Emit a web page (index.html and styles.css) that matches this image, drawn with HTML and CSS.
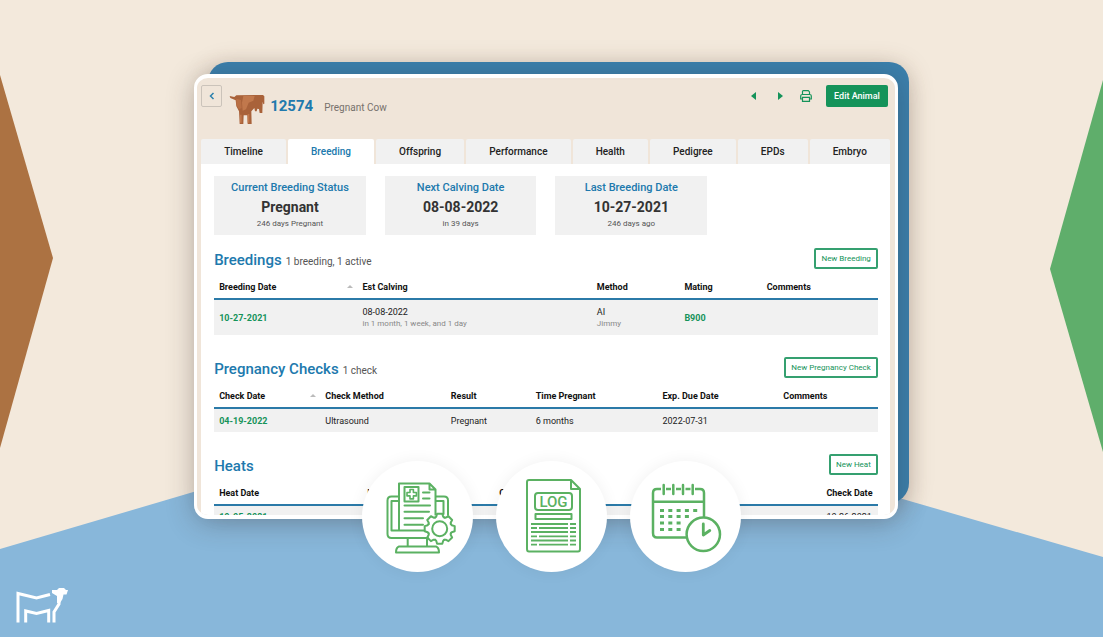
FILE: index.html
```html
<!DOCTYPE html>
<html lang="en">
<head>
<meta charset="utf-8">
<meta name="viewport" content="width=device-width, initial-scale=1">
<title>12574 – Breeding</title>
<link rel="stylesheet" href="styles.css">
</head>
<body>
<div class="stage">
  <svg class="backdrop" viewBox="0 0 1103 637" preserveAspectRatio="none" aria-hidden="true">
    <polygon points="0,75 53,258 0,448" fill="#ac7242"/>
    <polygon points="1103,80 1050,269 1103,452" fill="#5fae6b"/>
    <polygon points="0,549 533,392 1103,557 1103,637 0,637" fill="#88b7da"/>
  </svg>
  <div class="backing"></div>

  <main class="card">
    <header class="top">
      <button class="back" aria-label="Back">
        <svg width="6" height="8" viewBox="0 0 6 8"><path d="M4.500 1 1.500 4l3 3" fill="none" stroke="#2b80ad" stroke-width="1.500"/></svg>
      </button>
      <svg class="cow" viewBox="117 115 108 96" aria-hidden="true">
        <path d="M119 124l14 3 6-5 80-1 4 4v22l-3 2-2-8-1 34h-8l-2-12-5-1-2 8h-5l-2-10-9 10 1 38h-12l-1-26h-11l-1 26h-11l-2-38-8-15-2-18-16-7z" fill="#a9623a"/>
        <path d="M160 124h34l-4 14-14 6-8 20-10 4-2-24z" fill="#c1784c"/>
        <path d="M139 132l14 4 2 24-8 4-8-14z" fill="#b96f44"/>
        <path d="M150 180h5v24h-5zM173 178h5v26h-5z" fill="#c1784c"/>
      </svg>
      <h1 class="tag">12574</h1>
      <span class="kind">Pregnant Cow</span>
      <div class="actions">
        <button class="icon" aria-label="Previous animal"><svg width="6" height="8" viewBox="0 0 6 8"><path d="M5 0v8L0 4z" fill="#15935a"/></svg></button>
        <button class="icon" aria-label="Next animal"><svg width="6" height="8" viewBox="0 0 6 8"><path d="M1 0v8l5-4z" fill="#15935a"/></svg></button>
        <button class="icon" aria-label="Print"><svg width="12" height="12" viewBox="0 0 12 12" fill="none" stroke="#15935a" stroke-width="1.200"><path d="M2.500 4.500v-3q0-.8.8-.8h5l1.200 1.200v2.600M2.500 9H.7V6q0-1.500 1.500-1.500h7.600q1.500 0 1.500 1.500v3H9.500M2.500 7.300h7v4h-7z"/></svg></button>
        <button class="primary">Edit Animal</button>
      </div>
    </header>

    <nav class="tabs">
      <a href="#timeline">Timeline</a>
      <a href="#breeding" class="active" aria-current="page">Breeding</a>
      <a href="#offspring">Offspring</a>
      <a href="#performance">Performance</a>
      <a href="#health">Health</a>
      <a href="#pedigree">Pedigree</a>
      <a href="#epds">EPDs</a>
      <a href="#embryo">Embryo</a>
    </nav>

    <div class="content">
      <div class="stats">
        <div class="stat"><h2>Current Breeding Status</h2><strong>Pregnant</strong><small>246 days Pregnant</small></div>
        <div class="stat"><h2>Next Calving Date</h2><strong>08-08-2022</strong><small>in 39 days</small></div>
        <div class="stat"><h2>Last Breeding Date</h2><strong>10-27-2021</strong><small>246 days ago</small></div>
      </div>

      <section>
        <div class="head"><h2>Breedings</h2><span>1 breeding, 1 active</span><button class="outline">New Breeding</button></div>
        <table class="breedings">
          <colgroup><col class="c1"><col class="c2"><col class="c3"><col class="c4"><col class="c5"></colgroup>
          <thead><tr><th><div class="sort">Breeding Date</div></th><th>Est Calving</th><th>Method</th><th>Mating</th><th>Comments</th></tr></thead>
          <tbody><tr><td><a href="#b1">10-27-2021</a></td><td>08-08-2022<small>in 1 month, 1 week, and 1 day</small></td><td>AI<small>Jimmy</small></td><td><a href="#b900">B900</a></td><td></td></tr></tbody>
        </table>
      </section>

      <section>
        <div class="head"><h2>Pregnancy Checks</h2><span>1 check</span><button class="outline">New Pregnancy Check</button></div>
        <table class="checks">
          <colgroup><col class="c1"><col class="c2"><col class="c3"><col class="c4"><col class="c5"><col class="c6"></colgroup>
          <thead><tr><th><div class="sort">Check Date</div></th><th>Check Method</th><th>Result</th><th>Time Pregnant</th><th>Exp. Due Date</th><th>Comments</th></tr></thead>
          <tbody><tr><td><a href="#c1">04-19-2022</a></td><td>Ultrasound</td><td>Pregnant</td><td>6 months</td><td>2022-07-31</td><td></td></tr></tbody>
        </table>
      </section>

      <section>
        <div class="head"><h2>Heats</h2><button class="outline">New Heat</button></div>
        <table class="heats">
          <colgroup><col class="c1"><col class="c2"><col class="c3"><col class="c4"></colgroup>
          <thead><tr><th>Heat Date</th><th>Intensity</th><th>Comments</th><th>Check Date</th></tr></thead>
          <tbody><tr><td><a href="#h1">10-05-2021</a></td><td></td><td></td><td>10-26-2021</td></tr></tbody>
        </table>
      </section>
    </div>
  </main>

  <div class="features">
    <div class="feature">
      <svg viewBox="0 0 111 111" fill="none" stroke="#5bb162" stroke-width="2" stroke-linejoin="round" stroke-linecap="round" aria-label="Health records">
        <path d="M36 35.500H29.500q-4 0-4 4V73q0 4 4 4H66M74 35.500h8q4 0 4 4V54"/>
        <path d="M36 40h-6.500V69.500H62M74 40h7.500V53"/>
        <path d="M37 69V22.500H67.500l6 6V54M67.500 22.500v6h6"/>
        <path d="M42.500 26h14v14.500h-14z"/>
        <path d="M48 28.500h3.400v3h3v3.400h-3v3H48v-3h-3v-3.400h3z" stroke-width="1.600"/>
        <path d="M61 31.500h6.500M61 37.500h6.500M42.500 44.500H68M42.500 50.800H67M42.500 57.300H61M42.500 63.700H61"/>
        <path d="M45.700 77.500V85M65 77.500V85M37 85.500H74q3 1 3 6H34q0-5 3-6z"/>
        <g transform="translate(77.700 67.700)">
          <circle r="14" fill="#fff" stroke="none"/>
          <circle r="7.500"/>
          <path id="tooth" d="M-4.600-11.100-3.500-12-2.600-15H2.600L3.500-12 4.600-11.100"/>
          <use href="#tooth" transform="rotate(45)"/><use href="#tooth" transform="rotate(90)"/><use href="#tooth" transform="rotate(135)"/><use href="#tooth" transform="rotate(180)"/><use href="#tooth" transform="rotate(225)"/><use href="#tooth" transform="rotate(270)"/><use href="#tooth" transform="rotate(315)"/>
        </g>
      </svg>
    </div>
    <div class="feature">
      <svg viewBox="0 0 111 111" fill="none" stroke="#5bb162" stroke-width="2" stroke-linejoin="round" aria-label="Log">
        <path d="M75 19H33q-2 0-2 2v67q0 2.500 2 2.500h49q2 0 2-2.500V28zM75 19v9h9"/>
        <rect x="39" y="32" width="37" height="17" rx="3"/>
        <text x="57.500" y="46" text-anchor="middle" class="log">LOG</text>
        <path d="M39.500 53h36v5h-36z"/>
        <path d="M35 63H72M74 63h6M35 67h6M43 67H72M74 67h6M35 71H72M74 71h6M35 75.300h6M43 75.300H72M74 75.300h6M35 79.500H72M74 79.500h6M35 83.700h6M43 83.700H72M74 83.700h6" stroke-width="1.800"/>
      </svg>
    </div>
    <div class="feature">
      <svg viewBox="0 0 111 111" fill="none" stroke="#5bb162" stroke-width="2.500" stroke-linejoin="round" aria-label="Schedule">
        <path d="M31 28H27q-4 0-4 4V72q0 4.500 4 4.500H57M36 28h5M46 28h5M55.500 28h5M65 28h5q4 0 4 4V56M23 40.700H74"/>
        <path d="M33.700 24v9M43.300 24v9M53 24v9M62.700 24v9" stroke-linecap="round"/>
        <path d="M30 49.500h37.200M30 55.500h29M30 62h21M30 68.500h21" stroke-width="3" stroke-dasharray="4 4.300"/>
        <circle cx="73.300" cy="73.300" r="16.700" fill="#fff"/>
        <path d="M73.300 63V74l6.500-4.500" stroke-width="2.800" stroke-linecap="round"/>
      </svg>
    </div>
  </div>

  <svg class="logo" viewBox="0 0 54 38" fill="none" stroke="#fff" stroke-width="3" aria-label="Cattle logo">
    <path d="M3 35.500V6.500L21.500 11 35 7.500M10.700 35.500V24L21.500 26.500 33.700 23.500V35.500M39 35.500V25L44 17V9"/>
    <path d="M37 3h5l2-2h5l2 2h2L51.500 7.500H48.500L47.500 12 45 16H42V9L37 6z" fill="#fff" stroke="none"/>
  </svg>
</div>
</body>
</html>
```
FILE: styles.css
```css
* { box-sizing: border-box; }

body {
  margin: 0;
  font-family: Roboto, "Liberation Sans", sans-serif;
  color: #222;
}

h1, h2 { margin: 0; }
a { text-decoration: none; }

button {
  font-family: inherit;
  padding: 0;
  cursor: pointer;
}

.stage {
  position: relative;
  display: grid;
  grid-template-rows: minmax(0, 1fr);
  height: 100vh;
  min-height: 400px;
  padding: 74px 18.6% 118px 17.6%;
  background: #f3e9dc;
  overflow: hidden;
}

.backdrop {
  position: absolute;
  inset: 0;
  width: 100%;
  height: 100%;
}

.backing {
  position: absolute;
  inset: 62px 17.6% 134px 18.9%;
  border-radius: 20px;
  background: #3b80ad;
  box-shadow: 0 4px 24px rgba(90, 60, 40, 0.25);
}

.card {
  position: relative;
  overflow: hidden;
  padding: 0 5px 0 4px;
  border: solid #fff;
  border-width: 4px 3px;
  border-radius: 14px;
  background: #f0e5d9;
  box-shadow: 0 4px 28px rgba(50, 40, 40, 0.3);
}

.top {
  display: flex;
  align-items: flex-start;
  height: 61px;
  padding-top: 7px;
}

.back {
  display: grid;
  place-items: center;
  width: 21px;
  height: 22px;
  border: 1px solid #cbc3ba;
  border-radius: 2px;
  background: transparent;
}

.cow {
  width: 36px;
  height: 32px;
  margin: 8px 5px 0 7px;
}

.tag {
  margin-top: 11px;
  font-size: 15px;
  line-height: 20px;
  font-weight: 700;
  color: #2079ad;
}

.kind {
  margin: 15px 0 0 11px;
  font-size: 10px;
  line-height: 16px;
  color: #77716c;
}

.actions {
  display: flex;
  align-items: center;
  gap: 14px;
  margin-left: auto;
  margin-right: 2px;
}

.icon {
  display: grid;
  place-items: center;
  width: 12px;
  height: 22px;
  border: 0;
  background: none;
}

.primary {
  height: 22px;
  padding: 0 8px;
  border: 0;
  border-radius: 2px;
  background: #15935a;
  color: #fff;
  font-size: 9px;
  font-weight: 500;
}

.tabs {
  display: flex;
  gap: 2px;
}

.tabs a {
  flex: 1 1 auto;
  padding: 0 20px;
  border-radius: 2px 2px 0 0;
  background: #f1f1f1;
  color: #222;
  font-size: 10px;
  line-height: 25px;
  font-weight: 500;
  text-align: center;
}

.tabs .active {
  background: #fff;
  color: #2079ad;
}

.content {
  padding: 12px 12px 0 13px;
  background: #fff;
}

.stats {
  display: grid;
  grid-template-columns: repeat(4, 1fr);
  gap: 19px;
  margin-bottom: 13px;
}

.stat {
  display: flex;
  flex-direction: column;
  align-items: center;
  height: 59px;
  padding-top: 4px;
  background: #f1f1f1;
}

.stat h2 {
  font-size: 11px;
  line-height: 16px;
  font-weight: 500;
  color: #2079ad;
}

.stat strong {
  font-size: 14px;
  line-height: 22px;
  font-weight: 700;
  color: #333;
}

.stat small {
  font-size: 8px;
  line-height: 12px;
  color: #555;
}

section { margin-bottom: 22px; }

.head {
  display: flex;
  align-items: baseline;
  gap: 4px;
  height: 21px;
  margin-bottom: 6px;
}

.head h2 {
  font-size: 15px;
  line-height: 24px;
  font-weight: 500;
  color: #2079ad;
}

.head span {
  font-size: 10px;
  color: #555;
}

.outline {
  align-self: stretch;
  margin-left: auto;
  padding: 0 5px;
  border: 2px solid #35a070;
  border-radius: 2px;
  background: #fff;
  color: #15935a;
  font-size: 8px;
}

table {
  width: 100%;
  table-layout: fixed;
  border-collapse: collapse;
  font-size: 9px;
  line-height: 12px;
}

th, td {
  padding: 0 0 0 5px;
  text-align: left;
  white-space: nowrap;
}

th {
  height: 24px;
  border-bottom: 2px solid #2b7aa8;
  color: #111;
  font-weight: 700;
}

td {
  height: 24px;
  background: #f1f1f1;
}

.breedings td { height: 36px; }

td a {
  color: #15935a;
  font-weight: 700;
}

td small {
  display: block;
  font-size: 8px;
  line-height: 11px;
  color: #888;
}

.sort {
  display: flex;
  align-items: center;
  justify-content: space-between;
}

.sort::after {
  content: "";
  margin-right: 4px;
  border: 3px solid transparent;
  border-top: 0;
  border-bottom: 3px solid #bbb;
}

.breedings .c1 { width: 21.6%; }
.breedings .c2 { width: 35.3%; }
.breedings .c3 { width: 13.2%; }
.breedings .c4 { width: 12.4%; }
.breedings .c5 { width: 17.5%; }

.checks .c1 { width: 16%; }
.checks .c2 { width: 18.9%; }
.checks .c3 { width: 12.8%; }
.checks .c4 { width: 19.1%; }
.checks .c5 { width: 18.2%; }
.checks .c6 { width: 15%; }

.heats .c1 { width: 22.3%; }
.heats .c2 { width: 19.9%; }
.heats .c3 { width: 49.3%; }
.heats .c4 { width: 8.5%; }
.heats td { height: 22px; }

.features {
  position: absolute;
  right: 0;
  bottom: 65px;
  left: 0;
  display: flex;
  justify-content: center;
  gap: 23px;
}

.feature {
  width: 111px;
  height: 111px;
  border-radius: 50%;
  background: #fff;
  box-shadow: 0 0 16px rgba(0, 0, 0, 0.06);
}

.log {
  fill: #5bb162;
  stroke: none;
  font: 500 15px Roboto, sans-serif;
}

.logo {
  position: absolute;
  left: 15px;
  bottom: 12px;
  width: 54px;
  height: 38px;
}
```
